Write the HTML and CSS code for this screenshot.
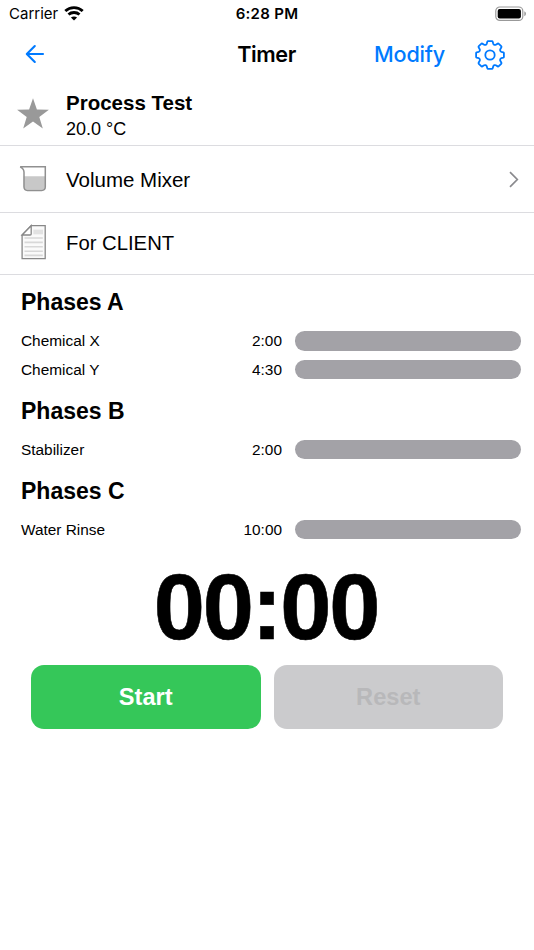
FILE: index.html
```html
<!DOCTYPE html>
<html lang="en">
<head>
<meta charset="utf-8">
<title>Timer</title>
<link rel="stylesheet" href="styles.css">
</head>
<body>
<header class="status">
  <div class="carrier"><span>Carrier</span>
    <svg class="wifi" width="20" height="15" viewBox="0 0 20 15" fill="none" stroke="#000" stroke-width="2.8"><path d="M1.3 5.1C6.1.5 13.9.5 18.7 5.1M4.5 8.6c3-2.8 8-2.8 11 0"/><path d="M10 14.6 6.9 11.5c1.7-1.5 4.5-1.5 6.2 0z" fill="#000" stroke="none"/></svg>
  </div>
  <span class="clock">6:28 PM</span>
  <svg class="battery" width="32" height="16" viewBox="0 0 32 16"><rect x=".8" y="1" width="27" height="13.4" rx="4" fill="none" stroke="#999" stroke-width="1.2"/><rect x="2.7" y="2.9" width="23.2" height="9.6" rx="2" fill="#000"/><path d="M29.3 5.3q1.7.7 1.7 2.5t-1.7 2.5z" fill="#999"/></svg>
</header>
<nav class="nav">
  <svg class="back" width="20" height="20" viewBox="0 0 20 20" fill="none" stroke="#007aff" stroke-width="2.1" stroke-linecap="round" stroke-linejoin="round"><path d="M18 10H2M9.8 2 1.8 10l8 8"/></svg>
  <h1 class="title">Timer</h1>
  <div class="actions">
    <span class="modify">Modify</span>
    <svg class="gear" width="30" height="30" viewBox="-15 -15 30 30" fill="none" stroke="#007aff" stroke-width="1.8" stroke-linejoin="round"><circle r="4.7"/><path d="M-2-13.9H2Q2.5-13.9 2.7-13.3L3.2-11.4Q3.5-10.5 4.3-10.2Q5.1-9.9 5.8-10.3L7.7-11.4Q8.3-11.7 8.8-11.2L11.2-8.8Q11.7-8.3 11.4-7.7L10.3-5.8Q9.9-5.1 10.2-4.3Q10.5-3.5 11.4-3.2L13.3-2.7Q13.9-2.5 13.9-2V2Q13.9 2.5 13.3 2.7L11.4 3.2Q10.5 3.5 10.2 4.3Q9.9 5.1 10.3 5.8L11.4 7.7Q11.7 8.3 11.2 8.8L8.8 11.2Q8.3 11.7 7.7 11.4L5.8 10.3Q5.1 9.9 4.3 10.2Q3.5 10.5 3.2 11.4L2.7 13.3Q2.5 13.9 2 13.9H-2Q-2.5 13.9-2.7 13.3L-3.2 11.4Q-3.5 10.5-4.3 10.2Q-5.1 9.9-5.8 10.3L-7.7 11.4Q-8.3 11.7-8.8 11.2L-11.2 8.8Q-11.7 8.3-11.4 7.7L-10.3 5.8Q-9.9 5.1-10.2 4.3Q-10.5 3.5-11.4 3.2L-13.3 2.7Q-13.9 2.5-13.9 2V-2Q-13.9-2.5-13.3-2.7L-11.4-3.2Q-10.5-3.5-10.2-4.3Q-9.9-5.1-10.3-5.8L-11.4-7.7Q-11.7-8.3-11.2-8.8L-8.8-11.2Q-8.3-11.7-7.7-11.4L-5.8-10.3Q-5.1-9.9-4.3-10.2Q-3.5-10.5-3.2-11.4L-2.7-13.3Q-2.5-13.9-2-13.9Z"/></svg>
  </div>
</nav>
<main>
  <section class="row process">
    <svg class="icon" width="34" height="34" viewBox="0 0 34 34"><path d="m17 1.2 3.9 11.4 12 .1-9.6 7.2 3.5 11.7L17 24.6l-9.8 7 3.5-11.7-9.6-7.2 12-.1z" fill="#999"/></svg>
    <div><div class="name">Process Test</div><div class="temp">20.0 °C</div></div>
  </section>
  <section class="row mixer">
    <svg class="icon" width="34" height="34" viewBox="0 0 34 34"><path d="M7.7 13.3H29v10.5q0 3-3 3H10.7q-3 0-3-3z" fill="#c8c8c8"/><path d="M4.2 3.8h25.1v20q0 3.6-3.6 3.6H11.4q-3.4 0-3.4-3.6V9.2Q8 5.8 4.2 3.8z" fill="none" stroke="#909090" stroke-width="1.5"/></svg>
    <div class="label">Volume Mixer</div>
    <svg class="chevron" width="10" height="17" viewBox="0 0 10 17" fill="none" stroke="#8a8a8e" stroke-width="1.7"><path d="m1 1.2 7.3 7.3L1 15.8"/></svg>
  </section>
  <section class="row client">
    <svg class="icon" width="34" height="36" viewBox="0 0 34 36"><path d="M15.2 1.7h14v33H6.1V11z" fill="#fafafa" stroke="#888" stroke-width="1.3"/><path d="M6.1 11 15.2 1.7v8.2q0 1.1-1.1 1.1z" fill="#fff" stroke="#888" stroke-width="1.3"/><path d="M8.5 14h18.3M8.5 18.4h18.3M8.5 22.8h18.3M8.5 27.2h18.3M8.5 31.4h18.3" stroke="#d8d8d8" stroke-width="1.6"/><path d="M17.3 5.6H27v4.7h-9.7z" fill="#e2e2e2"/></svg>
    <div class="label">For CLIENT</div>
  </section>
  <section class="phases">
    <h2>Phases A</h2>
    <div class="step"><span>Chemical X</span><span class="time">2:00</span><i class="bar"></i></div>
    <div class="step"><span>Chemical Y</span><span class="time">4:30</span><i class="bar"></i></div>
    <h2>Phases B</h2>
    <div class="step"><span>Stabilizer</span><span class="time">2:00</span><i class="bar"></i></div>
    <h2>Phases C</h2>
    <div class="step"><span>Water Rinse</span><span class="time">10:00</span><i class="bar"></i></div>
  </section>
  <div class="timer">00:00</div>
  <div class="buttons"><button class="start">Start</button><button class="reset" disabled>Reset</button></div>
</main>
</body>
</html>
```
FILE: styles.css
```css
* { box-sizing: border-box; }
body { margin: 0; height: 950px; overflow: hidden; background: #fff; color: #000; font-family: "Liberation Sans", Arial, sans-serif; }
h1, h2 { margin: 0; }
svg { display: block; flex: none; }
.status { display: grid; grid-template-columns: 1fr auto 1fr; align-items: center; height: 27px; padding: 0 7px 0 9px; font-family: Inter, sans-serif; font-size: 15px; }
.carrier { display: flex; align-items: center; gap: 6px; }
.wifi { margin-top: -1px; }
.clock { font-weight: 600; letter-spacing: .3px; margin-right: 2px; }
.battery { justify-self: end; }
.nav { display: grid; grid-template-columns: 1fr auto 1fr; align-items: center; height: 54px; padding: 0 29px 0 25px; font-family: Inter, sans-serif; font-size: 21.6px; }
.title { font-size: 21.6px; font-weight: 600; letter-spacing: -.4px; margin-left: 3px; }
.actions { display: flex; justify-content: flex-end; align-items: center; gap: 30px; }
.gear { margin-top: 1px; }
.modify { color: #007aff; font-weight: 500; letter-spacing: -.2px; }
.row { display: flex; align-items: center; padding: 0 15px 0 16px; border-bottom: 1px solid #dcdce0; font-size: 20.5px; }
.icon { margin-right: 16px; }
.process { height: 65px; }
.process .icon { margin-top: 1px; }
.mixer { height: 67px; }
.mixer .icon, .mixer .label { margin-top: 2px; }
.client { height: 62px; padding-bottom: 3px; font-size: 20.3px; }
.client .label { padding-top: 2px; }
.name { font-weight: bold; line-height: 27px; margin-top: 4px; }
.temp { font-size: 18px; line-height: 26px; }
.chevron { margin-left: auto; }
.phases { padding: 0 13px 0 21px; }
.phases h2 { height: 51.5px; line-height: 54px; font-size: 23px; }
.step { display: grid; grid-template-columns: 1fr 80px 226px; align-items: center; height: 28.5px; font-size: 15.4px; }
.step span { padding-top: 1px; }
.step .time { text-align: right; padding-right: 13px; }
.bar { height: 19.5px; border-radius: 9.5px; background: #a3a2a7; }
.timer { height: 121px; line-height: 126px; padding-right: 2px; text-align: center; font-size: 92px; font-weight: bold; letter-spacing: -2.2px; -webkit-text-stroke: .6px #000; }
.buttons { display: grid; grid-template-columns: 1fr 1fr; gap: 13px; padding: 0 31px; }
button { height: 64px; padding: 2px 0 0; border: 0; border-radius: 13px; font: bold 23.6px "Liberation Sans", Arial, sans-serif; }
.start { background: #35c759; color: #fff; }
.reset { background: #cbcbcd; color: #b8b8ba; }
```
